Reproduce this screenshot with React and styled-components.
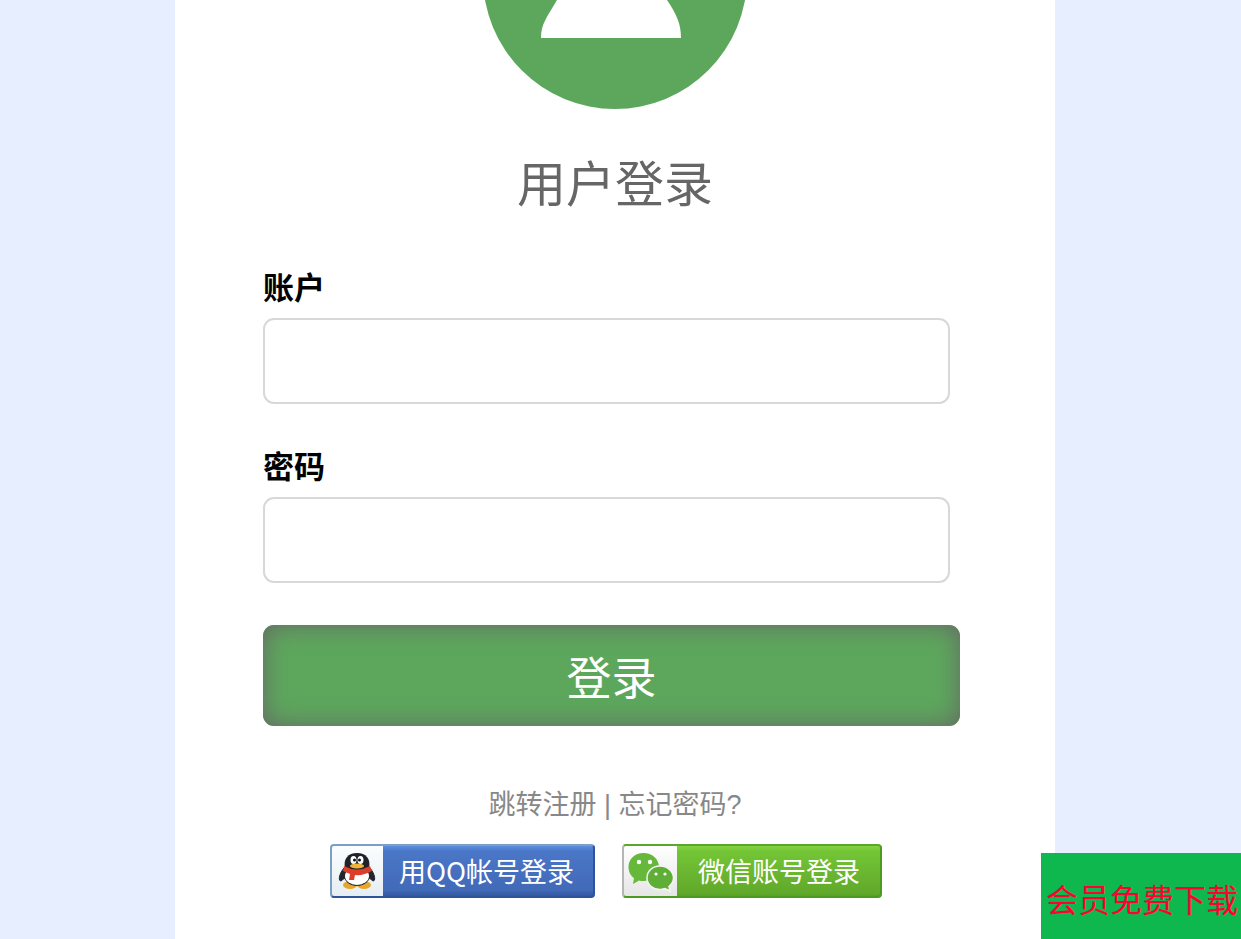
import React from "react";
import styled, { createGlobalStyle, css } from "styled-components";

const GlobalStyle = createGlobalStyle`
  *, *::before, *::after { box-sizing: border-box; }
  body {
    margin: 0;
    background: #e7eeff;
    font-family: "Noto Sans CJK SC", sans-serif;
    color: #000;
  }
`;

const Page = styled.div`
  display: flex;
  justify-content: center;
  min-height: 100vh;
  padding: 0 186px 0 175px;
  overflow: hidden;

  @media (max-width: 900px) {
    padding: 0;
  }
`;

const Panel = styled.main`
  flex: 1;
  max-width: 880px;
  padding: 0 88px 41px;
  background: #fff;
`;

const Avatar = styled.svg`
  display: block;
  width: 264px;
  height: 264px;
  margin: -155px auto 0;
`;

const Title = styled.h1`
  margin: 36px 0 50px;
  font-size: 49px;
  line-height: 72px;
  font-weight: 400;
  text-align: center;
  color: #666;
`;

const Form = styled.form`
  display: flex;
  flex-direction: column;
  gap: 42px;
`;

const Field = styled.div`
  display: flex;
  flex-direction: column;
  gap: 13px;
  margin-right: 17px;
`;

const Label = styled.label`
  font-size: 31px;
  line-height: 38px;
  font-weight: 700;
`;

const Input = styled.input`
  width: 100%;
  height: 86px;
  padding: 0 20px;
  border: 2px solid #dad7d9;
  border-radius: 11px;
  background: #fff;
  font: inherit;
  font-size: 31px;
  outline: none;
`;

const Submit = styled.button`
  margin-right: 7px;
  padding: 18px 0;
  border: 0;
  border-radius: 11px;
  background: #5da75d;
  box-shadow: inset 0 0 26px #666;
  color: #fff;
  font: inherit;
  font-size: 45px;
  line-height: 65px;
  cursor: pointer;
`;

const Links = styled.nav`
  margin-top: 59px;
  font-family: "Liberation Sans", "Noto Sans CJK SC", sans-serif;
  font-size: 27px;
  line-height: 40px;
  text-align: center;
  color: #888;
`;

const TextLink = styled.a`
  color: inherit;
  text-decoration: none;
`;

const Badges = styled.div`
  display: flex;
  flex-wrap: wrap;
  justify-content: center;
  gap: 27px;
  margin-top: 19px;
  padding-right: 18px;
`;

const qq = css`
  border-color: #7e9fc4 #2f529c #2f529c #7e9fc4;
  background: linear-gradient(#5b8fe0 0, #4b77c8 5px, #416ab8 44px, #34579f);
`;

const wechat = css`
  border-color: #5aa82b #4b9a22 #4b9a22 #b5b5b5;
  background: linear-gradient(#86d341 0, #74c536 5px, #60a82a 48px, #579f26);
`;

const Badge = styled.a`
  display: flex;
  height: 54px;
  border: 2px solid;
  border-radius: 4px;
  overflow: hidden;
  color: #fff;
  font-size: 27px;
  line-height: 50px;
  text-decoration: none;
  ${({ $kind }) => ($kind === "qq" ? qq : wechat)}
`;

const BadgeIcon = styled.svg`
  flex: none;
  width: ${({ $width }) => $width}px;
  height: 50px;
  background: ${({ $kind }) =>
    $kind === "qq" ? "linear-gradient(#fbfdfe, #e6eef4)" : "linear-gradient(#fff, #e6e6e6)"};
`;

const BadgeText = styled.span`
  padding: ${({ $kind }) => ($kind === "qq" ? "0 19px 0 16px" : "0 20px 0 21px")};
`;

const Download = styled.a`
  position: fixed;
  right: 0;
  bottom: 0;
  width: 200px;
  padding: 17px 0 13px 5px;
  background: #0fb84e;
  color: #ff0033;
  font-size: 32px;
  line-height: 56px;
  white-space: nowrap;
  text-decoration: none;
`;

function QqIcon() {
  return (
    <BadgeIcon $kind="qq" $width={51} viewBox="0 0 51 50" aria-hidden="true">
      <path d="M12 22C7 28 6 35 9 35L14 31M38 22C43 28 44 35 41 35L36 31" fill="#23252c" stroke="#23252c" strokeWidth="1" />
      <ellipse cx="18" cy="39" rx="7" ry="4" fill="#e9a62c" />
      <ellipse cx="32" cy="39" rx="7" ry="4" fill="#e9a62c" />
      <ellipse cx="25" cy="27" rx="14" ry="13" fill="#292a31" />
      <ellipse cx="25" cy="30" rx="12" ry="9" fill="#fff" />
      <path d="M13 22C11 13 16 7 25 7S39 13 37 22L31 26H19Z" fill="#202229" />
      <ellipse cx="21.500" cy="14" rx="3" ry="4" fill="#fff" />
      <ellipse cx="28.500" cy="14" rx="3" ry="4" fill="#fff" />
      <circle cx="22.500" cy="14" r="1.500" fill="#111" />
      <circle cx="27.500" cy="14" r="1.500" fill="#111" />
      <ellipse cx="25" cy="20" rx="7" ry="2.500" fill="#f0b438" />
      <path d="M12 20Q25 27 38 20L40 25Q31 30 23 29L22 34H17L18 28L11 25Z" fill="#dc3e2a" />
    </BadgeIcon>
  );
}

function WechatIcon() {
  return (
    <BadgeIcon $kind="wechat" $width={53} viewBox="0 0 53 50" aria-hidden="true">
      <path d="M19.500 7C11 7 4.500 13 4.500 21C4.500 26 7 30 10 32L9 38L15 34.500C24 37 35 31 35 21C35 13 28 7 19.500 7Z" fill="#65b83a" />
      <circle cx="15" cy="16" r="2.200" fill="#fff" />
      <circle cx="26" cy="16" r="2.200" fill="#fff" />
      <path d="M36 20C28.500 20 23 25 23 32C23 39 29.500 44 37 43.500L41 42.500L46 45L45 40.500C48 38 49.500 35 49.500 32C49.500 25 43 20 36 20Z" fill="#5fae36" stroke="#f4f4f4" strokeWidth="1.500" />
      <circle cx="32" cy="28" r="1.600" fill="#fff" />
      <circle cx="41" cy="28" r="1.600" fill="#fff" />
    </BadgeIcon>
  );
}

export default function App() {
  return (
    <>
      <GlobalStyle />
      <Page>
        <Panel>
          <Avatar viewBox="0 0 264 264" aria-hidden="true">
            <circle cx="132" cy="132" r="132" fill="#5da75d" />
            <circle cx="129" cy="92" r="42" fill="#fff" />
            <path d="M58 193C58 179 64 172 74 155C88 133 103 124 129 124S170 133 184 155C194 170 198 179 198 193Z" fill="#fff" />
          </Avatar>
          <Title>用户登录</Title>
          <Form onSubmit={(event) => event.preventDefault()}>
            <Field>
              <Label htmlFor="account">账户</Label>
              <Input id="account" type="text" autoComplete="username" />
            </Field>
            <Field>
              <Label htmlFor="password">密码</Label>
              <Input id="password" type="password" autoComplete="current-password" />
            </Field>
            <Submit type="submit">登录</Submit>
          </Form>
          <Links>
            <TextLink href="#register">跳转注册</TextLink> | <TextLink href="#forgot">忘记密码?</TextLink>
          </Links>
          <Badges>
            <Badge $kind="qq" href="#qq">
              <QqIcon />
              <BadgeText $kind="qq">用QQ帐号登录</BadgeText>
            </Badge>
            <Badge $kind="wechat" href="#wechat">
              <WechatIcon />
              <BadgeText $kind="wechat">微信账号登录</BadgeText>
            </Badge>
          </Badges>
        </Panel>
      </Page>
      <Download href="#download">会员免费下载</Download>
    </>
  );
}
